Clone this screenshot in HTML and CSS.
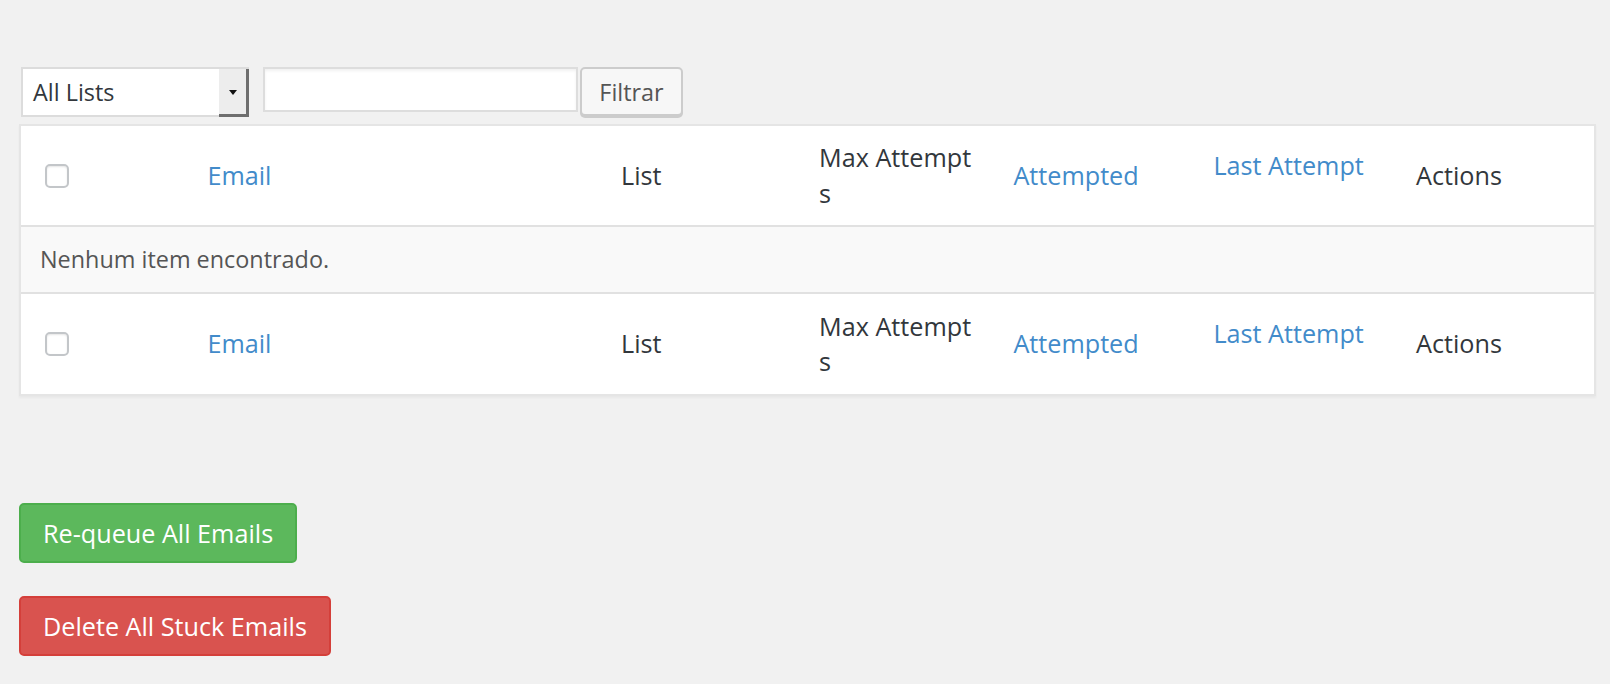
FILE: index.html
```html
<!DOCTYPE html>
<html>
<head>
<meta charset="utf-8">
<title>Stuck Emails</title>
<link rel="stylesheet" href="styles.css">
</head>
<body>
<div class="wrap">
  <div class="toolbar">
    <div class="select"><span class="select-text">All Lists</span><span class="select-arrow"><span class="tri"></span></span></div>
    <input class="search" type="text">
    <button class="btn-filter">Filtrar</button>
  </div>
  <table class="list">
    <colgroup>
      <col class="c-cb">
      <col class="c-email">
      <col class="c-list">
      <col class="c-max">
      <col class="c-att">
      <col class="c-last">
      <col class="c-act">
    </colgroup>
    <thead>
      <tr>
        <th class="cb"><span class="checkbox"></span></th>
        <th class="sortable"><a class="sort-link">Email</a></th>
        <th class="plain">List</th>
        <th class="plain max">Max Attempts</th>
        <th class="sortable"><a class="sort-link">Attempted</a></th>
        <th class="sortable"><a class="sort-link">Last Attempt<span class="indicator"></span></a></th>
        <th class="plain">Actions</th>
      </tr>
    </thead>
    <tbody>
      <tr><td colspan="7" class="empty">Nenhum item encontrado.</td></tr>
    </tbody>
    <tfoot>
      <tr>
        <th class="cb"><span class="checkbox"></span></th>
        <th class="sortable"><a class="sort-link">Email</a></th>
        <th class="plain">List</th>
        <th class="plain max">Max Attempts</th>
        <th class="sortable"><a class="sort-link">Attempted</a></th>
        <th class="sortable"><a class="sort-link">Last Attempt<span class="indicator"></span></a></th>
        <th class="plain">Actions</th>
      </tr>
    </tfoot>
  </table>
  <div class="actions">
    <button class="btn btn-success">Re-queue All Emails</button>
    <button class="btn btn-danger">Delete All Stuck Emails</button>
  </div>
</div>
</body>
</html>
```

FILE: styles.css
```css
html, body {
  margin: 0;
  padding: 0;
  background: #f1f1f1;
  font-family: "Open Sans", "Liberation Sans", sans-serif;
  color: #32373c;
}

.wrap {
  padding: 67px 14px 0 19px;
}

.toolbar {
  display: flex;
  align-items: flex-start;
  height: 57px;
}

.select {
  box-sizing: border-box;
  width: 228px;
  height: 50px;
  margin-left: 2px;
  background: #fff;
  border: 2px solid #dcdcdc;
  border-right: 0;
  display: flex;
  align-items: stretch;
}

.select-text {
  flex: 1;
  display: flex;
  align-items: center;
  padding-left: 10px;
  font-size: 23.4px;
  color: #32373c;
}

.select-arrow {
  box-sizing: border-box;
  width: 30px;
  background: #ededed;
  border-right: 3px solid #6e6e6e;
  border-bottom: 3px solid #6e6e6e;
  margin-bottom: -2px;
  display: flex;
  align-items: center;
  justify-content: center;
}

.tri {
  width: 0;
  height: 0;
  margin-top: 2px;
  border-left: 4.5px solid transparent;
  border-right: 4.5px solid transparent;
  border-top: 5px solid #111;
}

.search {
  box-sizing: border-box;
  width: 315px;
  height: 45px;
  margin: 0 0 0 14px;
  padding: 0 8px;
  border: 2px solid #dddddd;
  background: #fff;
  box-shadow: inset 0 2px 3px rgba(0, 0, 0, 0.06);
  font-family: inherit;
  font-size: 23.4px;
  outline: none;
}

.btn-filter {
  box-sizing: border-box;
  width: 103px;
  height: 49px;
  margin-left: 2px;
  padding: 0;
  background: #f7f7f7;
  border: 2px solid #cccccc;
  border-radius: 5px;
  box-shadow: 0 2px 0 #cccccc;
  color: #555;
  font-family: inherit;
  font-size: 23.4px;
}

.list {
  width: 1577px;
  table-layout: fixed;
  border-collapse: separate;
  border-spacing: 0;
  background: #fff;
  border: 2px solid #e5e5e5;
  box-shadow: 0 2px 2px rgba(0, 0, 0, 0.04);
}

.c-cb { width: 172px; }
.c-email { width: 410px; }
.c-list { width: 198px; }
.c-max { width: 198px; }
.c-att { width: 200px; }
.c-last { width: 199px; }
.c-act { width: 196px; }

.list th {
  text-align: left;
  font-weight: 400;
  font-size: 25.2px;
  line-height: 1.4;
  vertical-align: middle;
  color: #32373c;
}

.list thead th {
  border-bottom: 2px solid #e1e1e1;
}

.list tfoot th {
  border-top: 2px solid #e1e1e1;
}

.list th.plain {
  padding: 14.4px 18px;
}

.list th.max {
  padding-right: 24px;
  word-break: break-all;
}

.list th.sortable {
  padding: 0;
}

.sort-link {
  display: block;
  padding: 14.4px;
  color: #428bca;
  text-decoration: none;
}

.indicator {
  display: block;
  height: 21px;
}

.list th.cb {
  padding: 0 0 0 24px;
}

.checkbox {
  display: block;
  box-sizing: border-box;
  width: 24px;
  height: 24px;
  border: 2px solid #c3c6c9;
  border-radius: 5px;
  background: #fff;
  box-shadow: inset 0 1px 2px rgba(0, 0, 0, 0.1);
}

.empty {
  padding: 15px 19px;
  font-size: 23.4px;
  line-height: 35px;
  color: #555;
  background: #f9f9f9;
}

.actions {
  padding-top: 107px;
  display: flex;
  flex-direction: column;
  align-items: flex-start;
  gap: 33px;
}

.btn {
  display: block;
  padding: 10px 22px;
  border: 2px solid;
  border-radius: 5px;
  font-family: inherit;
  font-size: 25.2px;
  line-height: 36px;
  color: #fff;
}

.btn-success {
  background: #5cb85c;
  border-color: #4cae4c;
}

.btn-danger {
  background: #d9534f;
  border-color: #d43f3a;
}
```
